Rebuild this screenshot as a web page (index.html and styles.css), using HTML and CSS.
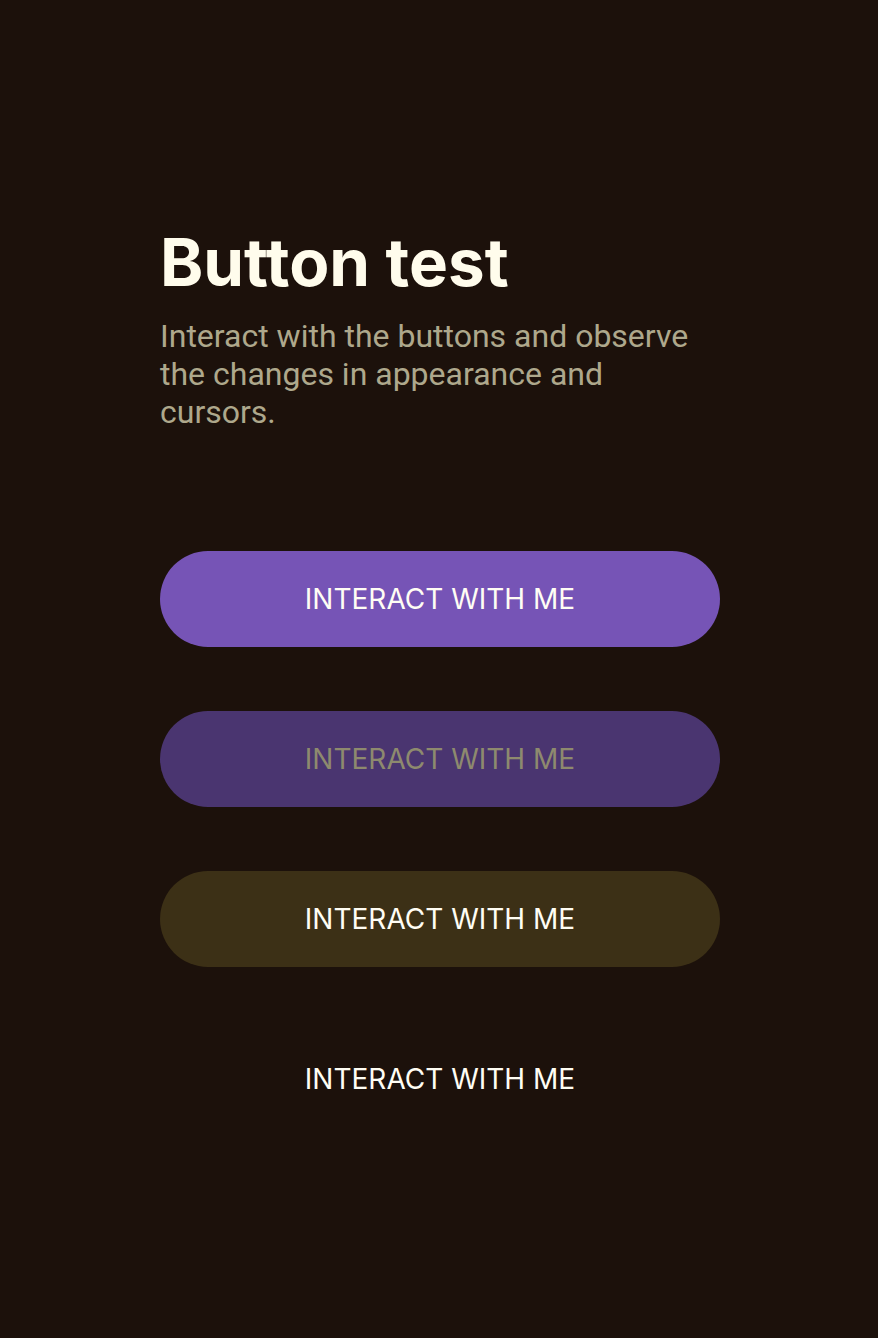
FILE: index.html
```html
<!DOCTYPE html>
<html lang="en">
<head>
<meta charset="utf-8">
<title>Button test</title>
<link rel="stylesheet" href="styles.css">
</head>
<body>
<main class="page">
  <header class="intro">
    <h1 class="title">Button test</h1>
    <p class="lead">Interact with the buttons and observe the changes in appearance and cursors.</p>
  </header>
  <div class="buttons">
    <button class="btn btn-primary">INTERACT WITH ME</button>
    <button class="btn btn-disabled" disabled>INTERACT WITH ME</button>
    <button class="btn btn-secondary">INTERACT WITH ME</button>
    <button class="btn btn-text">INTERACT WITH ME</button>
  </div>
</main>
</body>
</html>
```
FILE: styles.css
```css
html, body {
  margin: 0;
  padding: 0;
  background: #1c110b;
}

body {
  min-height: 1338px;
  font-family: "Roboto", "Liberation Sans", sans-serif;
}

.page {
  width: 560px;
  padding: 224px 0 0 160px;
}

.title {
  margin: 0;
  font-family: "Inter", "Liberation Sans", sans-serif;
  font-weight: 700;
  font-size: 65.5px;
  line-height: 1.2;
  color: #fffcec;
}

.lead {
  margin: 14px 0 0;
  font-size: 32px;
  line-height: 38px;
  color: #aea88c;
}

.buttons {
  display: flex;
  flex-direction: column;
  gap: 64px;
  margin-top: 120px;
}

.btn {
  height: 96px;
  width: 100%;
  border: none;
  border-radius: 48px;
  font-family: "Inter", "Liberation Sans", sans-serif;
  font-size: 28px;
  font-weight: 400;
  color: #fffdf4;
  background: transparent;
  padding: 0;
}

.btn-primary {
  background: #7654b6;
}

.btn-disabled {
  background: #4a3570;
  color: #8e8a6e;
}

.btn-secondary {
  background: #3c3016;
}
```
